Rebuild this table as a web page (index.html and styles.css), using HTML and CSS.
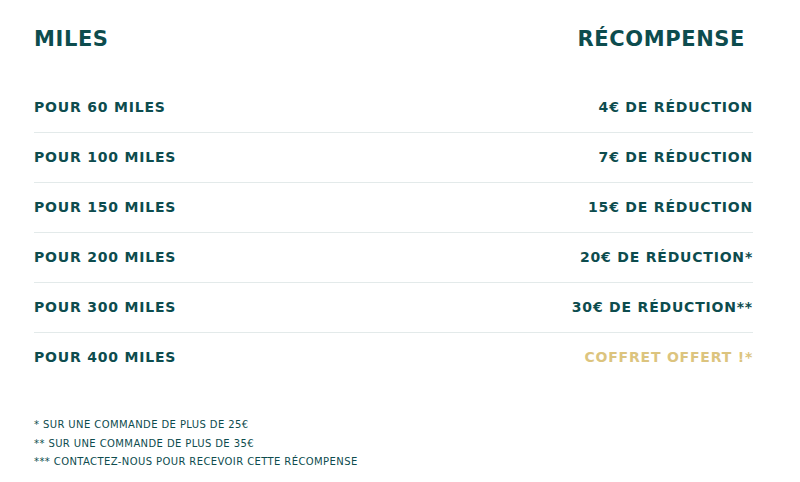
FILE: index.html
```html
<!DOCTYPE html>
<html lang="fr">
<head>
<meta charset="utf-8">
<title>Miles</title>
<link rel="stylesheet" href="styles.css">
</head>
<body>
<div class="page">
  <div class="head">
    <h2 class="head-cell">MILES</h2>
    <h2 class="head-cell head-right">RÉCOMPENSE</h2>
  </div>
  <div class="rows">
    <div class="row"><span>POUR 60 MILES</span><span>4€ DE RÉDUCTION</span></div>
    <div class="row"><span>POUR 100 MILES</span><span>7€ DE RÉDUCTION</span></div>
    <div class="row"><span>POUR 150 MILES</span><span>15€ DE RÉDUCTION</span></div>
    <div class="row"><span>POUR 200 MILES</span><span>20€ DE RÉDUCTION*</span></div>
    <div class="row"><span>POUR 300 MILES</span><span>30€ DE RÉDUCTION**</span></div>
    <div class="row row-last"><span>POUR 400 MILES</span><span class="gold">COFFRET OFFERT !*</span></div>
  </div>
  <div class="notes">
    <p>* SUR UNE COMMANDE DE PLUS DE 25€</p>
    <p>** SUR UNE COMMANDE DE PLUS DE 35€</p>
    <p>*** CONTACTEZ-NOUS POUR RECEVOIR CETTE RÉCOMPENSE</p>
  </div>
</div>
</body>
</html>
```
FILE: styles.css
```css
html, body { margin: 0; padding: 0; background: #fff; }
.page {
  width: 719px;
  padding: 26px 0 0 34px;
  font-family: "DejaVu Sans", sans-serif;
  color: #0d4c4e;
}
.head {
  display: flex;
  justify-content: space-between;
  padding-right: 8px;
  height: 57px;
}
.head-cell {
  margin: 0;
  font-size: 21px;
  font-weight: bold;
  letter-spacing: 0.6px;
  line-height: 26px;
}
.rows { display: flex; flex-direction: column; }
.row {
  box-sizing: border-box;
  display: flex;
  justify-content: space-between;
  align-items: center;
  height: 50px;
  padding-bottom: 1px;
  border-bottom: 1px solid #e3eaea;
  font-size: 14px;
  font-weight: bold;
  letter-spacing: 0.8px;
}
.row-last { border-bottom-color: transparent; }
.gold { color: #dcc47e; }
.notes { padding-top: 33px; }
.notes p {
  margin: 0;
  font-size: 10px;
  line-height: 18.5px;
  letter-spacing: 0.4px;
}
```
